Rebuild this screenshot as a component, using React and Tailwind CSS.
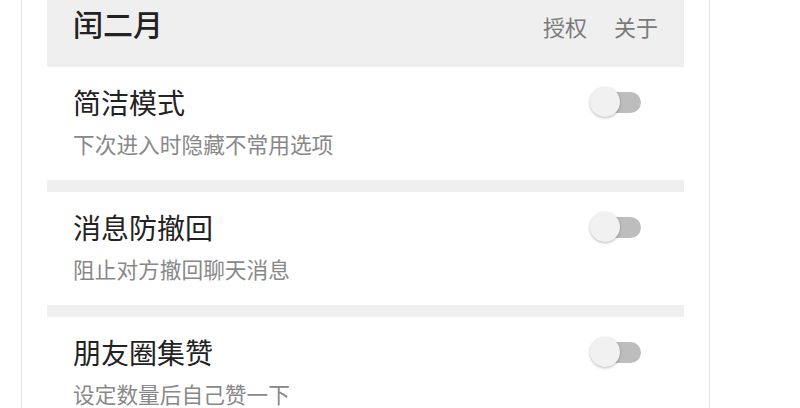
import React from "react";

function Toggle() {
  return (
    <div className="relative h-[30px] w-[51px] shrink-0">
      <div className="absolute right-0 top-[5px] h-[21px] w-[42px] rounded-full bg-[#bdbdbd]" />
      <div className="absolute left-0 top-0 h-[30px] w-[30px] rounded-full bg-[#f1f1f1] shadow-[0_1px_3px_rgba(0,0,0,0.28)]" />
    </div>
  );
}

function Row({ title, desc }) {
  return (
    <div className="bg-white pl-[26px] pr-[43px] pt-[17px] pb-[21px]">
      <div className="flex items-center justify-between">
        <div className="text-[28px] leading-[36px] text-[#222]">{title}</div>
        <Toggle />
      </div>
      <div className="mt-[9px] text-[21.7px] leading-[30px] text-[#888]">{desc}</div>
    </div>
  );
}

function Sep() {
  return <div className="h-[12px] bg-[#efefef]" />;
}

export default function App() {
  return (
    <div
      className="h-[408px] w-[800px] overflow-hidden bg-white"
      style={{ fontFamily: '"Noto Sans CJK SC", "Noto Sans", sans-serif' }}
    >
      <div className="ml-[21px] h-full w-[689px] border-x border-[#e2e2e2] bg-white px-[25px]">
        <div className="flex h-[67px] items-start justify-between bg-[#efefef] px-[26px] pt-[3px]">
          <div className="text-[30px] font-medium leading-[40px] text-[#222]">闰二月</div>
          <div className="mt-[3px] flex gap-[27px] text-[22px] leading-[40px] text-[#7a7a7a]">
            <span>授权</span>
            <span>关于</span>
          </div>
        </div>
        <Row title="简洁模式" desc="下次进入时隐藏不常用选项" />
        <Sep />
        <Row title="消息防撤回" desc="阻止对方撤回聊天消息" />
        <Sep />
        <Row title="朋友圈集赞" desc="设定数量后自己赞一下" />
      </div>
    </div>
  );
}
